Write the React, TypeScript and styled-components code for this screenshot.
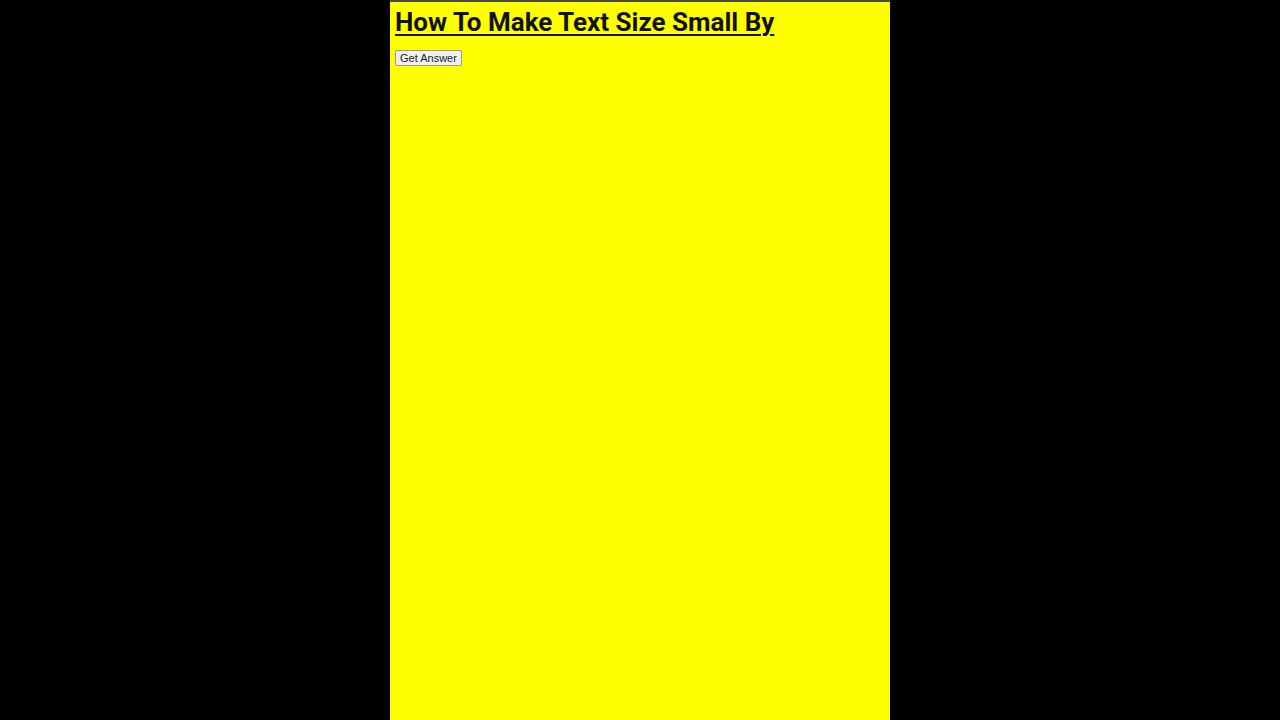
import React from "react";
import styled, { createGlobalStyle } from "styled-components";

const Global = createGlobalStyle`
  html, body { margin: 0; padding: 0; background: #000; height: 100%; }
  #root { height: 100%; }
`;

const Stage = styled.div`
  display: flex;
  justify-content: center;
  height: 720px;
  background: #000;
`;

const Phone = styled.div`
  width: 500px;
  height: 720px;
  background: #ffff00;
  border-top: 2px solid #4a4a3a;
  box-sizing: border-box;
  padding: 5px 5px;
  display: flex;
  flex-direction: column;
  align-items: flex-start;
`;

const Title = styled.h1`
  margin: 0;
  font-family: Roboto, "Liberation Sans", sans-serif;
  font-weight: 700;
  font-size: 26px;
  line-height: 30px;
  color: #111;
  text-decoration: underline;
  text-decoration-thickness: 2px;
  text-underline-offset: 3px;
`;

const Button = styled.button`
  margin-top: 13px;
  font-family: "Liberation Sans", Arial, sans-serif;
  font-size: 11px;
  color: #222;
  background: #f0f0f0;
  border: 1px solid #9a9a9a;
  border-radius: 2px;
  padding: 1px 4px;
  height: 16px;
  line-height: 12px;
`;

export default function App() {
  return (
    <>
      <Global />
      <Stage>
        <Phone>
          <Title>How To Make Text Size Small By</Title>
          <Button>Get Answer</Button>
        </Phone>
      </Stage>
    </>
  );
}
